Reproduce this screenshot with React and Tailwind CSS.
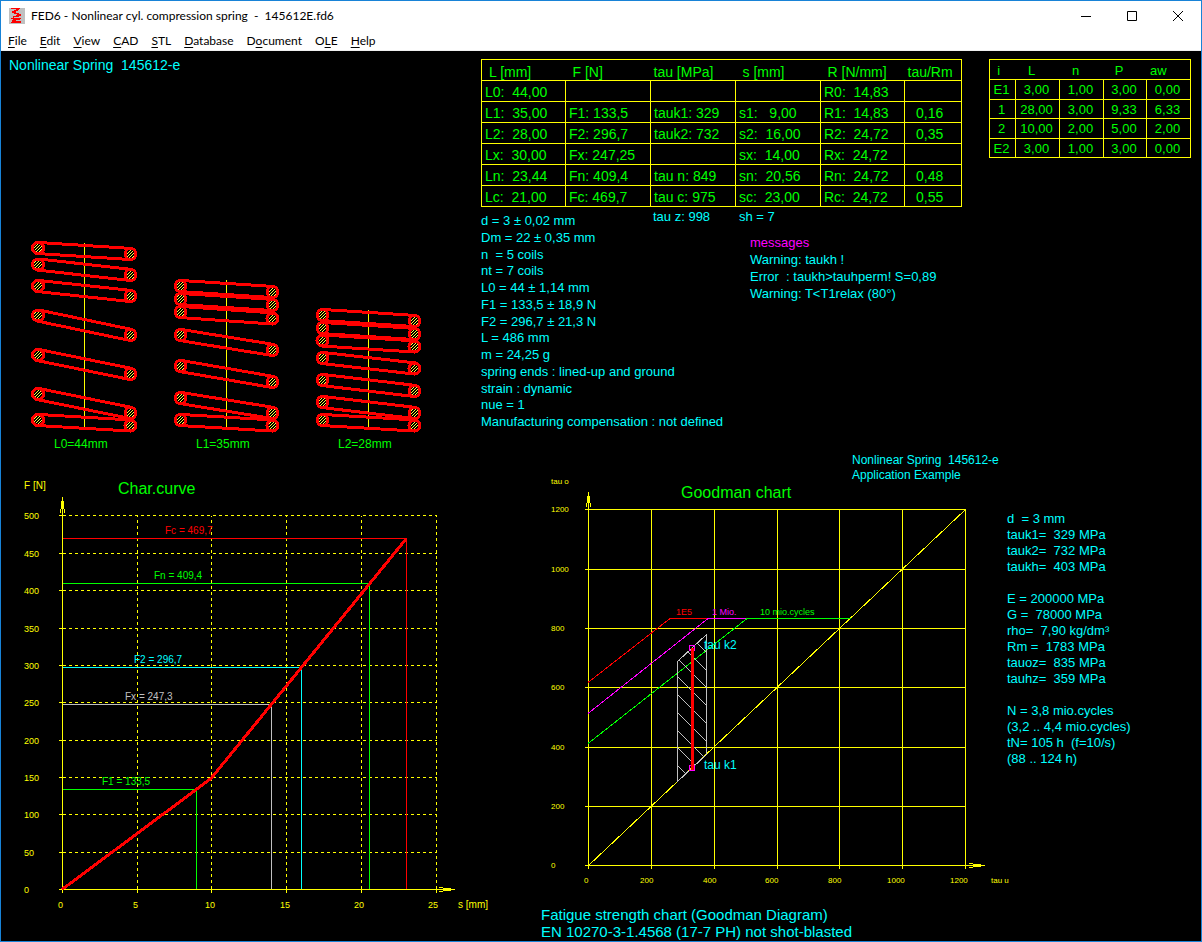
import React from "react";

const MENU = [
  ["", "F", "ile"],
  ["", "E", "dit"],
  ["", "V", "iew"],
  ["", "C", "AD"],
  ["", "S", "TL"],
  ["", "D", "atabase"],
  ["D", "o", "cument"],
  ["O", "L", "E"],
  ["", "H", "elp"],
];

const LOAD_HEAD = ["L [mm]", "F [N]", "tau [MPa]", "s [mm]", "R [N/mm]", "tau/Rm"];
const LOAD_HEAD_PAD = ["pl-[7px]", "pl-[7px]", "pl-[3px]", "pl-[7px]", "pl-[7px]", "pl-[3px]"];
const LOAD_ROWS = [
  ["L0:  44,00", "", "", "", "R0:  14,83", ""],
  ["L1:  35,00", "F1: 133,5", "tauk1: 329", "s1:   9,00", "R1:  14,83", "0,16"],
  ["L2:  28,00", "F2: 296,7", "tauk2: 732", "s2:  16,00", "R2:  24,72", "0,35"],
  ["Lx:  30,00", "Fx: 247,25", "", "sx:  14,00", "Rx:  24,72", ""],
  ["Ln:  23,44", "Fn: 409,4", "tau n: 849", "sn:  20,56", "Rn:  24,72", "0,48"],
  ["Lc:  21,00", "Fc: 469,7", "tau c: 975", "sc:  23,00", "Rc:  24,72", "0,55"],
];

const SECTION_ROWS = [
  ["E1", "3,00", "1,00", "3,00", "0,00"],
  ["1", "28,00", "3,00", "9,33", "6,33"],
  ["2", "10,00", "2,00", "5,00", "2,00"],
  ["E2", "3,00", "1,00", "3,00", "0,00"],
];

const PARAMS = [
  "d = 3 ± 0,02 mm",
  "Dm = 22 ± 0,35 mm",
  "n  = 5 coils",
  "nt = 7 coils",
  "L0 = 44 ± 1,14 mm",
  "F1 = 133,5 ± 18,9 N",
  "F2 = 296,7 ± 21,3 N",
  "L = 486 mm",
  "m = 24,25 g",
  "spring ends : lined-up and ground",
  "strain : dynamic",
  "nue = 1",
  "Manufacturing compensation : not defined",
];

const GOODMAN_TEXT = `d  = 3 mm
tauk1=  329 MPa
tauk2=  732 MPa
taukh=  403 MPa

E = 200000 MPa
G =  78000 MPa
rho=  7,90 kg/dm³
Rm =  1783 MPa
tauoz=  835 MPa
tauhz=  359 MPa

N = 3,8 mio.cycles
(3,2 .. 4,4 mio.cycles)
tN= 105 h  (f=10/s)
(88 .. 124 h)`;

const SPRINGS = [
  {
    label: "L0=44mm", labelX: 54, left: 38, right: 131, axis: 84.5, top: 243,
    coils: [[247.5, 253.5], [264, 274.5], [285.5, 295.5], [315, 334.5], [354.5, 373.5], [393.5, 412.5], [419.5, 425]],
  },
  {
    label: "L1=35mm", labelX: 196, left: 180.5, right: 273, axis: 226.5, top: 280,
    coils: [[285.5, 291.5], [298.5, 304.5], [311.5, 318], [334.5, 349.5], [365.5, 381.5], [397.5, 412.5], [419.5, 425]],
  },
  {
    label: "L2=28mm", labelX: 338, left: 322.5, right: 415, axis: 368.5, top: 310,
    coils: [[314.5, 320.5], [327.5, 333.5], [340, 346], [357.5, 368], [379.5, 390.5], [401.5, 412.5], [419.5, 425]],
  },
];

function Springs() {
  return (
    <svg width="416" height="216" viewBox="16 236 416 216" className="block mt-[163px] ml-[15px]" role="img" aria-label="Spring at L0, L1 and L2">
      <defs>
        <pattern id="wire" width="3" height="3" patternUnits="userSpaceOnUse">
          <rect width="3" height="3" fill="#000" />
          <path d="M2 0h1v1h-1zM1 1h1v1h-1zM0 2h1v1h-1z" fill="#ffff40" shapeRendering="crispEdges" />
        </pattern>
      </defs>
      {SPRINGS.map((s) => (
        <g key={s.label}>
          <path d={`M${s.axis} ${s.top}V427`} stroke="#ff0" shapeRendering="crispEdges" />
          {s.coils.map(([l, r], i) => (
            <g key={i} stroke="#f00" strokeWidth="3" shapeRendering="crispEdges">
              <path d={`M${s.left + 1} ${l - 5}L${s.right + 1} ${r - 5}M${s.left - 1} ${l + 6}L${s.right - 1} ${r + 6}`} />
              <circle cx={s.left} cy={l + 0.5} r="5.5" fill="url(#wire)" />
              <circle cx={s.right - 0.5} cy={r + 0.5} r="5.5" fill="url(#wire)" />
            </g>
          ))}
          <text x={s.labelX} y="448" fontSize="12" fill="#0f0">{s.label}</text>
        </g>
      ))}
    </svg>
  );
}

const FORCE_Y = [889.5, 852.5, 814.5, 777.5, 740.5, 702.5, 665.5, 628.5, 590.5, 553.5, 515.5];
const TRAVEL_X = [62.5, 137.5, 211.5, 286.5, 361.5, 436.5];
const TRAVEL_LABEL_X = [58, 133, 205, 280, 354, 428];
const LOADS = [
  { text: "Fc = 469,7", x: 406.5, y: 538.5, tx: 165, color: "#f00" },
  { text: "Fn = 409,4", x: 369.5, y: 583.5, tx: 154, color: "#0f0" },
  { text: "F2 = 296,7", x: 301.5, y: 667.5, tx: 134, color: "#0ff" },
  { text: "Fx = 247,3", x: 271.5, y: 704.5, tx: 125, color: "#c0c0c0" },
  { text: "F1 = 133,5", x: 196.5, y: 789.5, tx: 102, color: "#0f0" },
];

function CharCurve() {
  return (
    <svg width="472" height="440" viewBox="20 476 472 440" className="block mt-6 ml-[19px]" role="img" aria-label="Characteristic curve">
      <g stroke="#ff0" fill="none" shapeRendering="crispEdges">
        {FORCE_Y.slice(1).map((y) => (
          <path key={y} d={`M63 ${y}H437`} strokeDasharray="3 3" />
        ))}
        {TRAVEL_X.slice(1).map((x) => (
          <path key={x} d={`M${x} 889V516`} strokeDasharray="3 3" />
        ))}
        {FORCE_Y.map((y) => (
          <path key={y} d={`M59 ${y}h7`} />
        ))}
        {TRAVEL_X.map((x) => (
          <path key={x} d={`M${x} 886v7`} />
        ))}
        <path d="M62.5 497V889.5H455M60.5 509v4M64.5 509v4M439 887.5h4M439 891.5h4" />
        <path d="M61 501h3v8h-3zM443 888h8v3h-8z" fill="#ff0" stroke="none" />
      </g>
      <g fill="none" shapeRendering="crispEdges">
        {LOADS.map((l) => (
          <path key={l.text} d={`M63 ${l.y}H${l.x}V889`} stroke={l.color} />
        ))}
        <path d="M62 889.5L211 778.5L406 539" stroke="#f00" strokeWidth="3" />
      </g>
      {LOADS.map((l) => (
        <text key={l.text} x={l.tx} y={l.y - 4.5} fontSize="10" fill={l.color}>{l.text}</text>
      ))}
      <g fill="#ff0" fontSize="9">
        {FORCE_Y.map((y, i) => (
          <text key={y} x="24" y={y + 3.5}>{i * 50}</text>
        ))}
        {TRAVEL_LABEL_X.map((x, i) => (
          <text key={x} x={x} y="908">{i * 5}</text>
        ))}
        <text x="24" y="489" fontSize="10">F [N]</text>
        <text x="458" y="908" fontSize="10">s [mm]</text>
      </g>
      <text x="118" y="494" fontSize="16" fill="#0f0">Char.curve</text>
    </svg>
  );
}

const UPPER_Y = [865.5, 806.5, 747.5, 687.5, 628.5, 569.5, 509.5];
const LOWER_X = [588.5, 651.5, 714.5, 777.5, 839.5, 902.5, 965.5];
const LOWER_LABEL_X = [584, 640, 703, 765, 828, 887, 950];
const HATCH_Y = [623, 641, 658, 676, 694, 712, 730, 747, 765];

function Goodman() {
  return (
    <svg width="466" height="416" viewBox="541 474 466 416" className="block shrink-0 overflow-visible" role="img" aria-label="Goodman chart">
      <defs>
        <clipPath id="range">
          <path d="M677 662L707 633V754L677 783z" />
        </clipPath>
      </defs>
      <g stroke="#ff0" fill="none" shapeRendering="crispEdges">
        {UPPER_Y.map((y) => (
          <path key={y} d={`M585 ${y}H966`} />
        ))}
        {LOWER_X.map((x) => (
          <path key={x} d={`M${x} 509V869`} />
        ))}
        <path d="M588.5 492V509M966 865.5H985M586.5 503v4M590.5 503v4M969 863.5h4M969 867.5h4" />
        <path d="M587 496h3v7h-3zM973 864h8v3h-8z" fill="#ff0" stroke="none" />
        <path d="M588.5 865.5L965.5 509.5" />
      </g>
      <g fill="none" shapeRendering="crispEdges">
        <path d="M588 682.5L670 618.5H708" stroke="#f00" />
        <path d="M588 713.5L708 618.5H747" stroke="#f0f" />
        <path d="M588 743.5L747 618.5H851" stroke="#0f0" />
        <g stroke="#c0c0c0">
          <path d="M677.5 661.5L706.5 634.5V754.5L677.5 781.5z" />
          <g clipPath="url(#range)">
            {HATCH_Y.map((y) => (
              <path key={y} d={`M677 ${y}l30 30`} />
            ))}
          </g>
        </g>
        <circle cx="692" cy="648" r="3" stroke="#f0f" />
        <circle cx="692" cy="768" r="3" stroke="#f0f" />
        <path d="M692.5 648V770" stroke="#f00" strokeWidth="3" />
      </g>
      <g fontSize="9">
        <text x="676" y="615" fill="#f00">1E5</text>
        <text x="712" y="615" fill="#f0f">1 Mio.</text>
        <text x="760" y="615" fill="#0f0">10 mio.cycles</text>
      </g>
      <g fontSize="12" fill="#0ff">
        <text x="704" y="649">tau k2</text>
        <text x="704" y="769">tau k1</text>
      </g>
      <g fontSize="8" fill="#ff0">
        {UPPER_Y.map((y, i) => (
          <text key={y} x="551" y={y + 2.5}>{i * 200}</text>
        ))}
        {LOWER_LABEL_X.map((x, i) => (
          <text key={x} x={x} y="883">{i * 200}</text>
        ))}
        <text x="551" y="484">tau o</text>
        <text x="991" y="883">tau u</text>
      </g>
      <text x="681" y="498" fontSize="16" fill="#0f0">Goodman chart</text>
    </svg>
  );
}

function TitleBar() {
  return (
    <header className="flex h-[29px] items-center pl-2">
      <svg width="16" height="16" viewBox="0 0 16 16" className="mr-[6px]" shapeRendering="crispEdges" aria-hidden="true">
        <rect width="16" height="16" fill="#c0c0c0" />
        <path d="M2 .500H11M10 1L3 4.500M4 4.500L12 7M11 7.500L4 9M2 10.500H12M11 11L3 12.500M3 13L12 14M2 14.500H12" stroke="#f00" strokeWidth="1.500" fill="none" />
      </svg>
      <h1 className="flex-1 whitespace-pre text-[12px] leading-4">FED6 - Nonlinear cyl. compression spring  -  145612E.fd6</h1>
      <button aria-label="Minimize" className="flex h-[29px] w-[46px] items-center justify-center">
        <svg width="10" height="10" viewBox="0 0 10 10" stroke="#000" fill="none"><path d="M0 5.500H10" /></svg>
      </button>
      <button aria-label="Maximize" className="flex h-[29px] w-[46px] items-center justify-center">
        <svg width="10" height="10" viewBox="0 0 10 10" stroke="#000" fill="none"><path d="M.5 .5h9v9h-9z" /></svg>
      </button>
      <button aria-label="Close" className="flex h-[29px] w-[46px] items-center justify-center">
        <svg width="10" height="10" viewBox="0 0 10 10" stroke="#000" fill="none"><path d="M0 0L10 10M10 0L0 10" /></svg>
      </button>
    </header>
  );
}

export default function App() {
  return (
    <div className="flex min-h-screen flex-col border border-[#1883d7] bg-white font-['Lato',sans-serif] text-black">
      <TitleBar />
      <nav className="flex h-[21px] items-center gap-[13px] border-b border-[#f0f0f0] pl-[7px] pt-px text-[12px] leading-5">
        {MENU.map(([before, key, after]) => (
          <button key={before + key + after}>
            {before}<span className="underline underline-offset-2">{key}</span>{after}
          </button>
        ))}
      </nav>
      <main className="flex flex-1 bg-black font-['Liberation_Sans',Arial,sans-serif] text-[#00ffff]">
        <section className="w-[480px] shrink-0 pt-[6px]">
          <h2 className="whitespace-pre pl-2 text-[14px] leading-4">Nonlinear Spring  145612-e</h2>
          <Springs />
          <CharCurve />
        </section>

        <section className="min-w-0 flex-1 pt-2">
          <div className="flex items-start gap-[27px]">
            <table className="w-[481px] shrink-0 table-fixed border-collapse border border-[#ffff00] text-left text-[14px] leading-5 text-[#00ff00]">
              <colgroup>
                <col className="w-[84px]" />
                <col className="w-[85px]" />
                <col className="w-[85px]" />
                <col className="w-[85px]" />
                <col className="w-[84px]" />
                <col className="w-[57px]" />
              </colgroup>
              <thead>
                <tr>
                  {LOAD_HEAD.map((h, i) => (
                    <th key={h} className={`h-[21px] whitespace-pre p-0 pt-1 font-normal leading-4 ${LOAD_HEAD_PAD[i]}`}>{h}</th>
                  ))}
                </tr>
              </thead>
              <tbody>
                {LOAD_ROWS.map((row) => (
                  <tr key={row[0]}>
                    {row.map((c, i) => (
                      <td key={i} className={`h-[21px] whitespace-pre border border-[#ffff00] py-0 pr-0 pt-px leading-4 ${i === 5 ? "pl-[11px]" : "pl-[3px]"}`}>{c}</td>
                    ))}
                  </tr>
                ))}
              </tbody>
            </table>

            <table className="h-[99px] w-[202px] shrink-0 table-fixed border-collapse border border-[#ffff00] text-center text-[13px] leading-4 text-[#00ff00]">
              <colgroup>
                <col className="w-[26px]" />
                <col className="w-[44px]" />
                <col className="w-[44px]" />
                <col className="w-[43px]" />
                <col className="w-[44px]" />
              </colgroup>
              <thead>
                <tr>
                  <th className="p-0 pr-2 pt-[3px] font-normal">i</th>
                  <th className="p-0 pr-3 pt-[3px] font-normal">L</th>
                  <th className="p-0 pr-3 pt-[3px] font-normal">n</th>
                  <th className="p-0 pr-3 pt-[3px] font-normal">P</th>
                  <th className="p-0 pr-5 pt-[3px] font-normal">aw</th>
                </tr>
              </thead>
              <tbody>
                {SECTION_ROWS.map((row) => (
                  <tr key={row[0]}>
                    {row.map((c, i) => (
                      <td key={i} className="border border-[#ffff00] p-0 pr-[2px] pt-[2px]">{c}</td>
                    ))}
                  </tr>
                ))}
              </tbody>
            </table>
          </div>

          <div className="mt-[2px] grid grid-cols-[172px_86px_1fr] grid-rows-[16px_1fr] whitespace-pre text-[13px] leading-4">
            <ul className="col-span-2 col-start-1 row-span-2 row-start-1 flex h-[221px] flex-col justify-between pt-1">
              {PARAMS.map((p) => (
                <li key={p}>{p}</li>
              ))}
            </ul>
            <p className="col-start-2 row-start-1">tau z: 998</p>
            <p className="col-start-3 row-start-1">sh = 7</p>
            <div className="col-start-3 row-start-2 pl-[11px] pt-[9px] leading-[17px]">
              <p className="text-[#ff00ff]">messages</p>
              <p>Warning: taukh !</p>
              <p>{"Error  : taukh>tauhperm! S=0,89"}</p>
              <p>{"Warning: T<T1relax (80°)"}</p>
            </div>
          </div>

          <div className="mt-[23px] whitespace-pre pl-[371px] text-[12px] leading-[15px]">
            <p>Nonlinear Spring  145612-e</p>
            <p>Application Example</p>
          </div>
          <div className="-mt-[9px] flex pl-[60px]">
            <Goodman />
            <p className="whitespace-pre pt-[37px] text-[13px] leading-4">{GOODMAN_TEXT}</p>
          </div>
          <div className="mt-4 pl-[60px] text-[15px] leading-[17px]">
            <p>Fatigue strength chart (Goodman Diagram)</p>
            <p>EN 10270-3-1.4568 (17-7 PH) not shot-blasted</p>
          </div>
        </section>
      </main>
    </div>
  );
}
